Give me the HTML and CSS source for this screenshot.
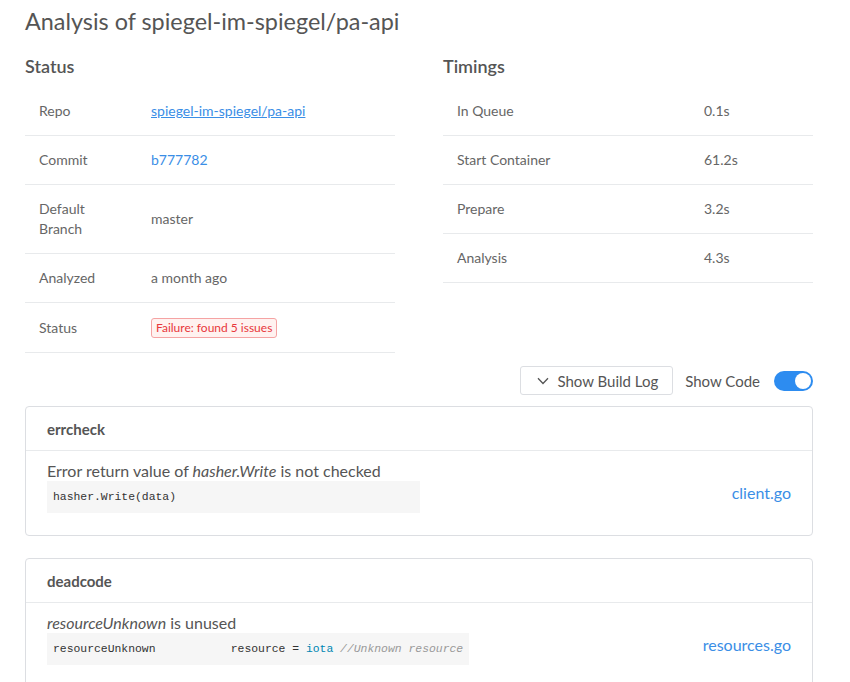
FILE: index.html
```html
<!DOCTYPE html>
<html>
<head>
<meta charset="utf-8">
<link rel="stylesheet" href="styles.css">
</head>
<body>
<div class="page">
  <h1 class="title">Analysis of spiegel-im-spiegel/pa-api</h1>
  <div class="columns">
    <section class="col">
      <h2 class="sub">Status</h2>
      <div class="kv kv-status">
        <div class="row"><div class="k">Repo</div><div class="v"><a class="link underline" href="#">spiegel-im-spiegel/pa-api</a></div></div>
        <div class="row"><div class="k">Commit</div><div class="v"><a class="link" href="#">b777782</a></div></div>
        <div class="row"><div class="k">Default<br>Branch</div><div class="v">master</div></div>
        <div class="row"><div class="k">Analyzed</div><div class="v">a month ago</div></div>
        <div class="row"><div class="k">Status</div><div class="v"><span class="badge">Failure: found 5 issues</span></div></div>
      </div>
    </section>
    <section class="col">
      <h2 class="sub">Timings</h2>
      <div class="kv kv-timing">
        <div class="row"><div class="k">In Queue</div><div class="v">0.1s</div></div>
        <div class="row"><div class="k">Start Container</div><div class="v">61.2s</div></div>
        <div class="row"><div class="k">Prepare</div><div class="v">3.2s</div></div>
        <div class="row"><div class="k">Analysis</div><div class="v">4.3s</div></div>
      </div>
    </section>
  </div>
  <div class="toolbar">
    <button class="btn"><svg class="chev" width="12" height="8" viewBox="0 0 12 8"><path d="M1 1.2 L6 6.5 L11 1.2" fill="none" stroke="#555" stroke-width="1.3"/></svg>Show Build Log</button>
    <span class="toggle-label">Show Code</span>
    <span class="switch"><span class="knob"></span></span>
  </div>
  <div class="card">
    <div class="card-head">errcheck</div>
    <div class="card-body">
      <div class="issue">
        <div class="msg">Error return value of <em>hasher.Write</em> is not checked</div>
        <pre class="code">hasher.Write(data)</pre>
      </div>
      <a class="file" href="#">client.go</a>
    </div>
  </div>
  <div class="card">
    <div class="card-head">deadcode</div>
    <div class="card-body">
      <div class="issue">
        <div class="msg"><em>resourceUnknown</em> is unused</div>
        <pre class="code">resourceUnknown           resource = <span class="kw">iota</span> <span class="cm">//Unknown resource</span></pre>
      </div>
      <a class="file" href="#">resources.go</a>
    </div>
  </div>
</div>
</body>
</html>
```
FILE: styles.css
```css
* { box-sizing: border-box; }
body {
  margin: 0;
  font-family: "Lato", "Open Sans", sans-serif;
  color: #666;
  background: #fff;
}
.page {
  width: 838px;
  padding: 0 25px;
}
.title {
  margin: 0;
  padding-top: 6px;
  font-size: 23.4px;
  font-weight: 400;
  line-height: 30px;
  color: #555;
}
.columns {
  display: grid;
  grid-template-columns: 370px 370px;
  column-gap: 48px;
  margin-top: 18px;
}
.sub {
  margin: 0 0 9px;
  font-size: 18px;
  font-weight: 600;
  line-height: 24px;
  color: #555;
}
.kv .row {
  display: flex;
  align-items: center;
  padding: 14px 14px;
  border-bottom: 1px solid #e8eaec;
  font-size: 14px;
  line-height: 20px;
  color: #666;
}
.kv-status .k { width: 112px; flex: none; }
.kv-timing .k { width: 247px; flex: none; }
.link { color: #3a8ee6; text-decoration: none; }
.link.underline { text-decoration: underline; }
.badge {
  display: inline-block;
  font-size: 12px;
  line-height: 18px;
  padding: 0 4px;
  color: #e8373b;
  background: #fff2f0;
  border: 1px solid #f5a3a3;
  border-radius: 3px;
}
.toolbar {
  display: flex;
  justify-content: flex-end;
  align-items: center;
  margin-top: 13px;
  margin-bottom: 11px;
}
.btn {
  display: flex;
  align-items: center;
  height: 29px;
  padding: 0 14px 0 16px;
  font-family: inherit;
  font-size: 15px;
  color: #555;
  background: #fff;
  border: 1px solid #dcdee2;
  border-radius: 3px;
}
.chev { margin-right: 8px; }
.toggle-label {
  margin-left: 12px;
  font-size: 15px;
  color: #555;
}
.switch {
  position: relative;
  display: inline-block;
  width: 39px;
  height: 20px;
  margin-left: 14px;
  border-radius: 10px;
  background: #2d8cf0;
}
.knob {
  position: absolute;
  top: 2px;
  right: 2px;
  width: 16px;
  height: 16px;
  border-radius: 50%;
  background: #fff;
}
.card {
  border: 1px solid #dcdee2;
  border-radius: 4px;
  margin-bottom: 22px;
}
.card-head {
  height: 44px;
  padding: 0 21px;
  display: flex;
  align-items: center;
  font-size: 15px;
  font-weight: 700;
  color: #555;
  border-bottom: 1px solid #e8eaec;
}
.card-body {
  display: flex;
  justify-content: space-between;
  align-items: center;
  padding: 10px 21px 22px;
}
.msg {
  font-size: 16px;
  line-height: 20px;
  color: #555;
}
.code {
  display: block;
  width: fit-content;
  min-width: 373px;
  margin: 0;
  padding: 0 6px;
  height: 32px;
  line-height: 32px;
  background: #f6f6f6;
  font-family: "Liberation Mono", monospace;
  font-size: 11.4px;
  color: #333;
}
.kw { color: #0086b3; }
.cm { color: #999; font-style: italic; }
.file {
  margin-top: 10px;
  font-size: 16px;
  color: #3a8ee6;
  text-decoration: none;
}
```
